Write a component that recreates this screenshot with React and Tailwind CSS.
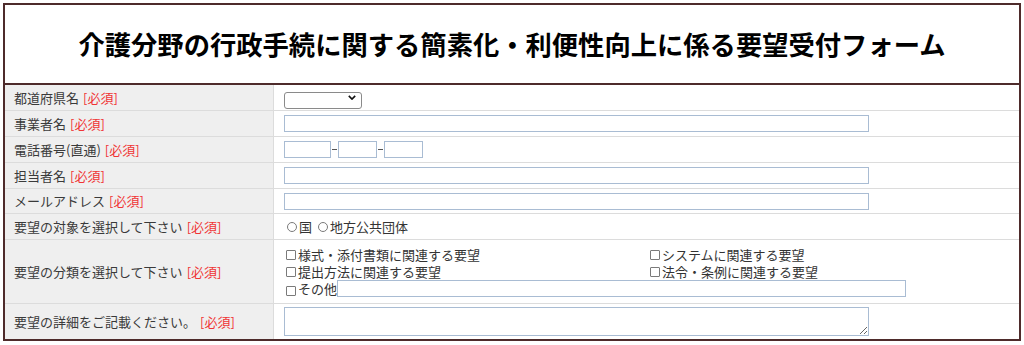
import { useState } from "react";

const font = { fontFamily: '"Noto Sans CJK JP", "Noto Sans", sans-serif' };

const Required = () => <span className="ml-1 text-[#f03434]">[必須]</span>;

const Row = ({ label, height, children, last }) => (
  <div
    className={`flex ${last ? "" : "border-b border-[#dcdcdc]"}`}
    style={{ height }}
  >
    <div className="flex w-[269px] shrink-0 items-center border-r border-[#dcdcdc] bg-[#efefef] pl-[9px] text-[13px] text-[#3a3a3a]">
      {label}
      <Required />
    </div>
    <div className="flex flex-1 items-center pl-[10px]">{children}</div>
  </div>
);

const TextBox = ({ className }) => (
  <input
    type="text"
    className={`h-[17px] border border-[#a9bcd3] bg-white text-[13px] outline-none ${className}`}
  />
);

const Check = ({ label, className }) => (
  <label className={`flex items-center text-[13px] leading-[17px] text-[#333] ${className || ""}`}>
    <span className="mr-[2px] inline-block h-[10px] w-[10px] rounded-[1px] border border-[#7a7a7a] bg-white" />
    {label}
  </label>
);

const Radio = ({ label }) => (
  <label className="mr-[6px] flex items-center text-[13px] text-[#333]">
    <span className="mr-[2px] inline-block h-[10px] w-[10px] rounded-full border border-[#7a7a7a] bg-white" />
    {label}
  </label>
);

const App = () => {
  const [pref, setPref] = useState("");

  return (
    <div className="h-[345px] w-[1024px] bg-white pl-[3px] pt-[3px]" style={font}>
      <div className="w-[1018px] border-2 border-[#4e2b2b]">
        <div className="flex h-[80px] items-center justify-center border-b-2 border-[#4e2b2b]">
          <h1 className="text-[26.3px] font-bold text-black">
            介護分野の行政手続に関する簡素化・利便性向上に係る要望受付フォーム
          </h1>
        </div>

        <Row label="都道府県名" height={26}>
          <div className="relative h-[17px] w-[78px]">
            <select
              value={pref}
              onChange={(e) => setPref(e.target.value)}
              className="h-full w-full appearance-none rounded-[3px] border border-[#8a8a8a] bg-white text-[13px]"
            >
              <option value=""></option>
            </select>
            <svg
              viewBox="0 0 10 6"
              className="pointer-events-none absolute right-[6px] top-[6px] h-[5px] w-[8px]"
            >
              <path d="M1 1 L5 5 L9 1" fill="none" stroke="#111" strokeWidth="2" />
            </svg>
          </div>
        </Row>

        <Row label="事業者名" height={26}>
          <TextBox className="w-[585px]" />
        </Row>

        <Row label="電話番号(直通)" height={26}>
          <TextBox className="w-[47px]" />
          <span className="mx-[1px] h-px w-[5px] bg-[#555]" />
          <TextBox className="w-[39px]" />
          <span className="mx-[1px] h-px w-[5px] bg-[#555]" />
          <TextBox className="w-[39px]" />
        </Row>

        <Row label="担当者名" height={26}>
          <TextBox className="w-[585px]" />
        </Row>

        <Row label="メールアドレス" height={25}>
          <TextBox className="w-[585px]" />
        </Row>

        <Row label="要望の対象を選択して下さい" height={26}>
          <div className="flex items-center pl-[3px]">
            <Radio label="国" />
            <Radio label="地方公共団体" />
          </div>
        </Row>

        <Row label="要望の分類を選択して下さい" height={64}>
          <div className="flex flex-col pl-[2px]">
            <div className="grid grid-cols-[364px_1fr]">
              <Check label="様式・添付書類に関連する要望" />
              <Check label="システムに関連する要望" />
              <Check label="提出方法に関連する要望" />
              <Check label="法令・条例に関連する要望" />
            </div>
            <div className="flex h-[17px] items-center">
              <span className="mr-[2px] mt-[5px] inline-block h-[10px] w-[10px] rounded-[1px] border border-[#7a7a7a] bg-white" />
              <span className="text-[13px] leading-[15px] text-[#333]">その他</span>
              <TextBox className="w-[569px] bg-[#fbfbfb]" />
            </div>
          </div>
        </Row>

        <Row label="要望の詳細をご記載ください。" height={35} last>
          <textarea className="h-[29px] w-[585px] border border-[#a9bcd3] bg-white text-[13px] outline-none" />
        </Row>
      </div>
    </div>
  );
};

export default App;
